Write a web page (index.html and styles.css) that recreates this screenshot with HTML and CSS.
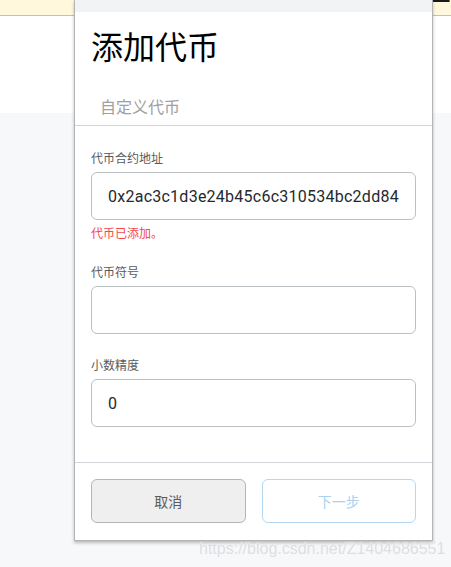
FILE: index.html
```html
<!DOCTYPE html>
<html lang="zh-CN">
<head>
<meta charset="utf-8">
<title>添加代币</title>
<link rel="stylesheet" href="styles.css">
</head>
<body>
<div class="topbar"><span class="topbar-mark"></span></div>
<div class="whiteband"></div>

<div class="modal">
  <div class="modal-top"></div>
  <h1 class="title">添加代币</h1>
  <div class="tabs"><span class="tab">自定义代币</span></div>
  <div class="form">
    <div class="field">
      <div class="label">代币合约地址</div>
      <input class="input" type="text" value="0x2ac3c1d3e24b45c6c310534bc2dd84b7ed84cd0">
      <div class="error">代币已添加。</div>
    </div>
    <div class="field">
      <div class="label">代币符号</div>
      <input class="input" type="text" value="">
    </div>
    <div class="field">
      <div class="label">小数精度</div>
      <input class="input" type="text" value="0">
    </div>
  </div>
  <div class="footer">
    <button class="btn btn-cancel">取消</button>
    <button class="btn btn-next">下一步</button>
  </div>
</div>

<div class="watermark">https://blog.csdn.net/Z1404686551</div>
</body>
</html>
```

FILE: styles.css
```css
html, body {
  margin: 0;
  padding: 0;
}
body {
  background: #f7f8fa;
  font-family: "Noto Sans CJK SC", "Noto Sans", sans-serif;
  width: 451px;
  height: 567px;
  overflow: hidden;
  position: relative;
}
.topbar {
  height: 15px;
  background: #fff8dc;
  border-bottom: 1px solid #c9c1a2;
  display: flex;
  justify-content: flex-end;
  align-items: flex-start;
  overflow: hidden;
}
.topbar-mark {
  width: 16px;
  height: 2px;
  margin-right: 1px;
  background: #1a1a1a;
  border-left: 1px solid #d08a3a;
  border-right: 1px solid #4a7fc0;
}
.whiteband {
  height: 97px;
  background: #ffffff;
}
.modal {
  position: absolute;
  left: 74px;
  top: 0;
  width: 359px;
  box-sizing: border-box;
  background: #ffffff;
  border: 1px solid #b4b4b4;
  border-top: none;
  box-shadow: 0 2px 3px rgba(0, 0, 0, 0.25);
}
.modal-top {
  height: 12px;
  background: #f2f3f5;
}
.title {
  margin: 0;
  padding: 13px 16px 0;
  font-size: 32px;
  line-height: 40px;
  font-weight: 400;
  color: #000000;
}
.tabs {
  margin-top: 31px;
  padding: 0 25px 9px;
  border-bottom: 1px solid #d2d6da;
}
.tab {
  display: block;
  font-size: 16px;
  line-height: 20px;
  color: #a0a0a0;
}
.form {
  padding: 24px 16px 35px;
  display: flex;
  flex-direction: column;
  gap: 23px;
}
.field {
  display: flex;
  flex-direction: column;
}
.label {
  font-size: 12px;
  line-height: 16px;
  color: #5a5a5a;
  margin-bottom: 6px;
}
.input {
  display: block;
  box-sizing: border-box;
  width: 100%;
  height: 48px;
  margin: 0;
  padding: 0 16px;
  border: 1px solid #bbc0c5;
  border-radius: 6px;
  background: #ffffff;
  font-family: Roboto, "Noto Sans", sans-serif;
  font-size: 16px;
  letter-spacing: 0.25px;
  color: #24292e;
  outline: none;
}
.error {
  margin-top: 5px;
  font-size: 12px;
  line-height: 16px;
  color: #f5474e;
}
.footer {
  border-top: 1px solid #d2d6da;
  padding: 16px 16px 17px;
  display: flex;
  gap: 16px;
}
.btn {
  flex: 1;
  height: 44px;
  margin: 0;
  border-radius: 6px;
  font-family: "Noto Sans CJK SC", "Noto Sans", sans-serif;
  font-size: 14px;
  cursor: pointer;
}
.btn-cancel {
  background: #efefef;
  border: 1px solid #b5b5b5;
  color: #5b5b5b;
}
.btn-next {
  background: #ffffff;
  border: 1px solid #b3d8f3;
  color: #a9d2f1;
}
.watermark {
  position: absolute;
  left: 199px;
  top: 539px;
  font-family: "Liberation Sans", Arial, sans-serif;
  font-size: 16px;
  line-height: 20px;
  color: #dcdee1;
  text-shadow: 0 0 1px #ffffff;
  white-space: nowrap;
}
```
